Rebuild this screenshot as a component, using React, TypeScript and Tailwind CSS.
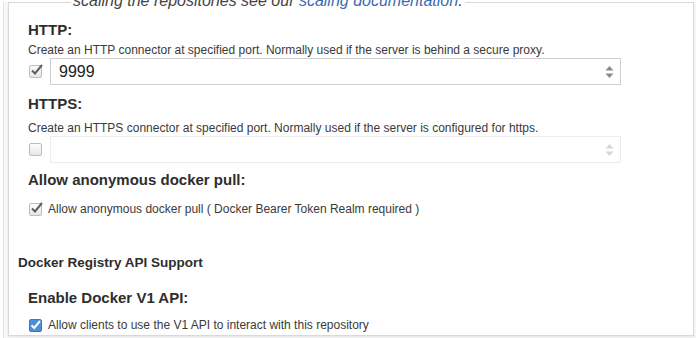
function Spinner({ faded }: { faded?: boolean }) {
  const c = faded ? "#d6d6d6" : "#8a8a8a"
  return (
    <svg width="9" height="14" viewBox="0 0 9 14" className="absolute right-[6px] top-1/2 -translate-y-1/2">
      <path d="M4.5 1 L8.5 5.5 H0.5 Z" fill={c} />
      <path d="M4.5 13 L8.5 8.5 H0.5 Z" fill={c} />
    </svg>
  )
}

function Check({ checked, blue }: { checked?: boolean; blue?: boolean }) {
  if (blue) {
    return (
      <span className="flex h-[13px] w-[13px] items-center justify-center rounded-[2px] border border-[#3a78c2] bg-[#4a8fd8]">
        <svg width="11" height="10" viewBox="0 0 11 10">
          <path d="M1.5 5.2 L4.2 8 L10 1" stroke="white" strokeWidth="2" fill="none" />
        </svg>
      </span>
    )
  }
  return (
    <span className="relative flex h-[13px] w-[13px] items-center justify-center rounded-[2px] border border-[#bdbdbd] bg-gradient-to-b from-[#fdfdfd] to-[#e6e6e6]">
      {checked && (
        <svg width="13" height="12" viewBox="0 0 13 12" className="absolute -top-[2px] left-[0px]">
          <path d="M2 6.5 L5 9.5 L12 1" stroke="#5f5f5f" strokeWidth="2" fill="none" />
        </svg>
      )}
    </span>
  )
}

function Heading({ children }: { children: React.ReactNode }) {
  return <h3 className="text-[15px] font-bold leading-[18px] text-[#2e2e2e]">{children}</h3>
}

function Desc({ children }: { children: React.ReactNode }) {
  return <p className="text-[12px] leading-[16px] text-[#3a3a3a]">{children}</p>
}

export default function App() {
  return (
    <div className="h-[338px] w-[696px] overflow-hidden bg-white pl-[3px] pt-[2px] font-['Liberation_Sans',Arial,sans-serif]">
      <div className="h-[340px] border-l border-[#e4e4e4] bg-[#f8f8f8] pl-[4px] pr-[2px]">
        <div className="h-[334px] border border-[#d9d9d9] bg-white shadow-[0_1px_2px_rgba(0,0,0,0.08)]">
          <div className="-mt-[14px] pl-[62px]">
            <span className="bg-white px-[2px] text-[16px] italic leading-[18px] text-[#444]">
              scaling the repositories see our <span className="text-[#3a6db0]">scaling documentation</span>.
            </span>
          </div>

          <div className="pl-[19px] pr-[72px]">
            <div className="mt-[8px]">
              <Heading>HTTP:</Heading>
            </div>
            <div className="mt-[3px]">
              <Desc>Create an HTTP connector at specified port. Normally used if the server is behind a secure proxy.</Desc>
            </div>
            <div className="mt-[0px] flex items-center gap-[8px] pl-[1px]">
              <Check checked />
              <div className="relative flex h-[27px] flex-1 items-center border border-[#cfcfcf] bg-white pl-[8px] text-[16px] text-[#222]">
                9999
                <Spinner />
              </div>
            </div>

            <div className="mt-[10px]">
              <Heading>HTTPS:</Heading>
            </div>
            <div className="mt-[7px]">
              <Desc>Create an HTTPS connector at specified port. Normally used if the server is configured for https.</Desc>
            </div>
            <div className="mt-[0px] flex items-center gap-[8px] pl-[1px]">
              <Check />
              <div className="relative h-[27px] flex-1 border border-[#ececec] bg-white">
                <Spinner faded />
              </div>
            </div>

            <div className="mt-[8px]">
              <Heading>Allow anonymous docker pull:</Heading>
            </div>
            <div className="mt-[12px] flex items-center gap-[6px] pl-[1px]">
              <Check checked />
              <Desc>Allow anonymous docker pull ( Docker Bearer Token Realm required )</Desc>
            </div>
          </div>

          <div className="mt-[38px] pl-[9px]">
            <h2 className="text-[13.5px] font-bold leading-[16px] text-[#2e2e2e]">Docker Registry API Support</h2>
          </div>

          <div className="pl-[19px]">
            <div className="mt-[18px]">
              <Heading>Enable Docker V1 API:</Heading>
            </div>
            <div className="mt-[10px] flex items-center gap-[6px] pl-[1px]">
              <Check blue />
              <Desc>Allow clients to use the V1 API to interact with this repository</Desc>
            </div>
          </div>
        </div>
      </div>
    </div>
  )
}
